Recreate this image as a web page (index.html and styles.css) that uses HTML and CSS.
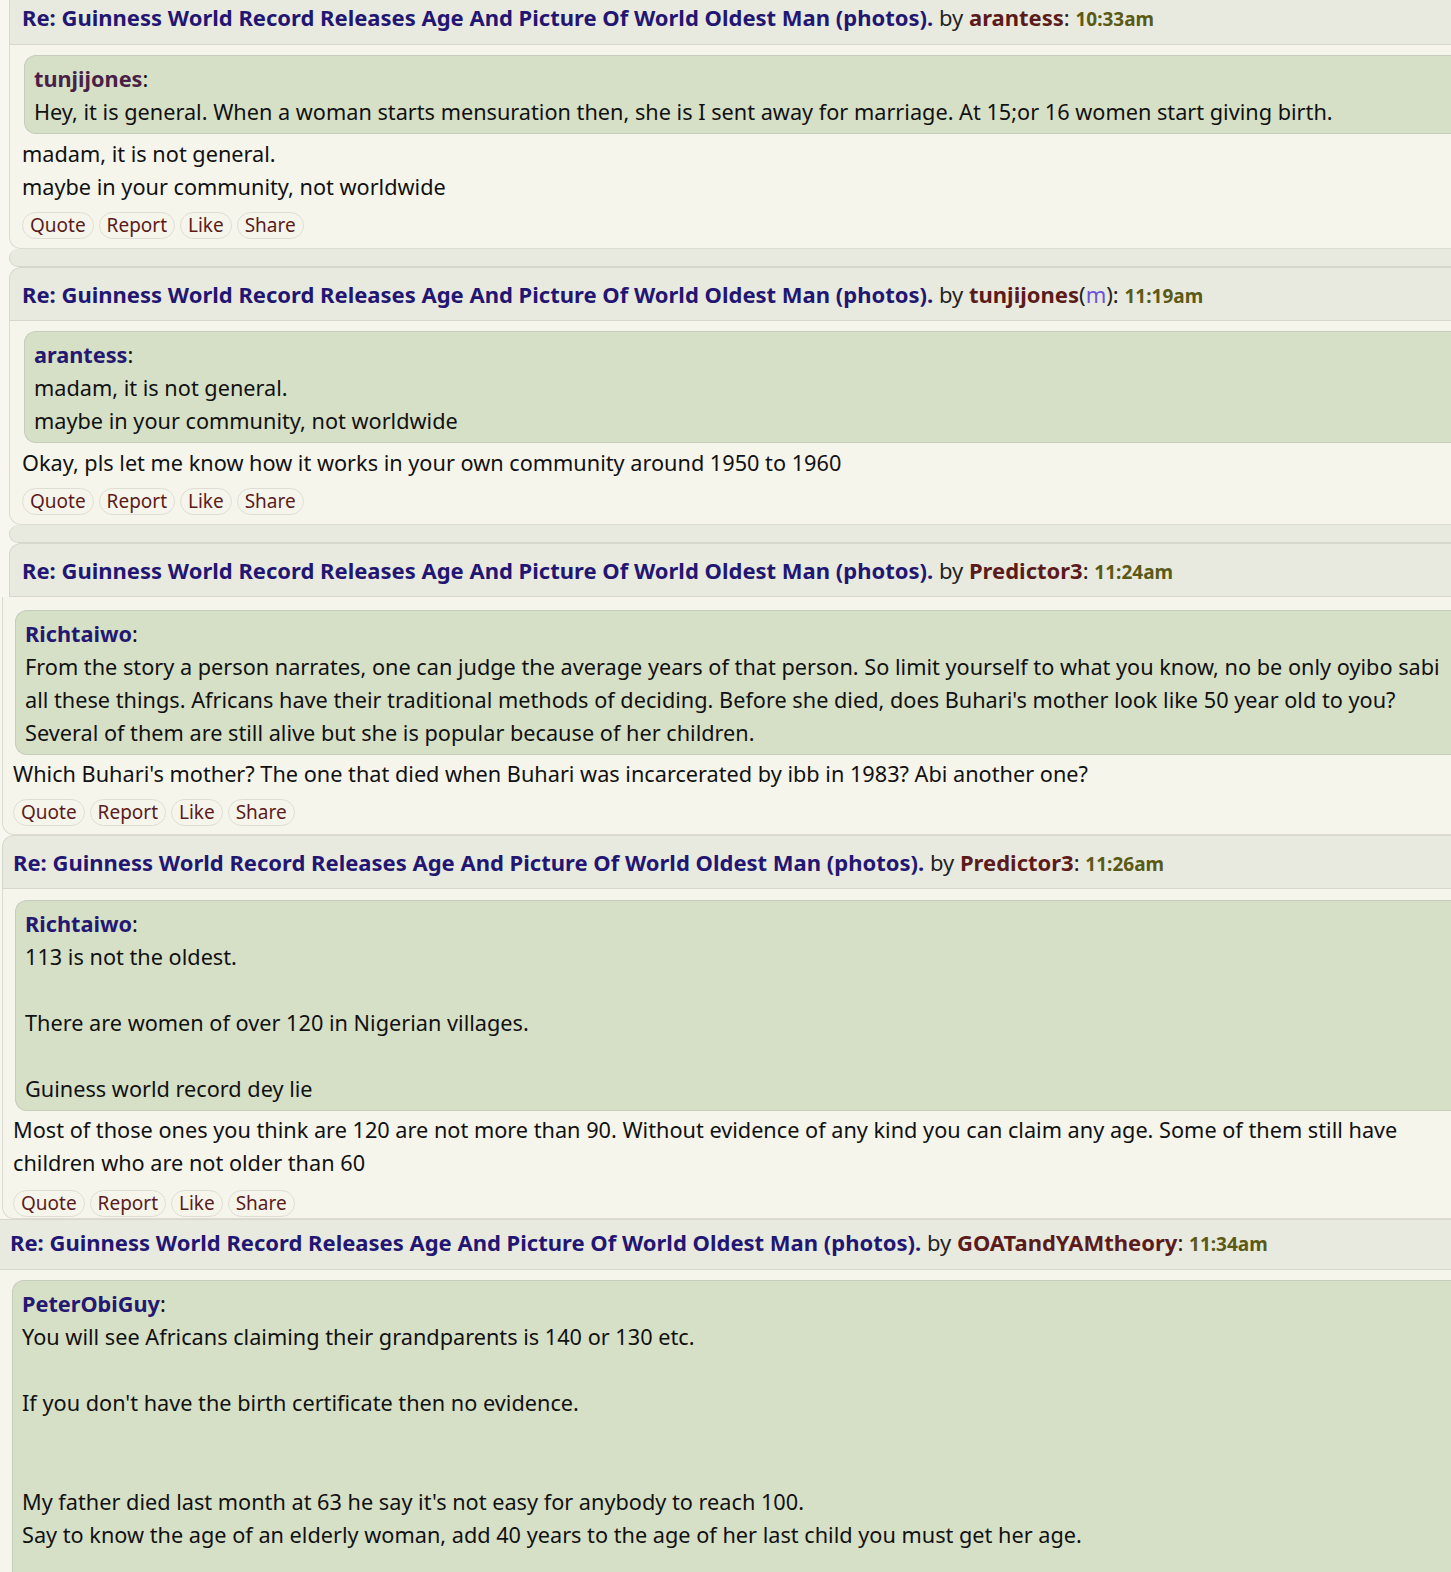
FILE: index.html
```html
<!DOCTYPE html>
<html lang="en">
<head>
  <meta charset="UTF-8" />
  <title>Re: Guinness World Record Releases Age And Picture Of World Oldest Man (photos)</title>
  <meta name="viewport" content="width=device-width, initial-scale=1.0" />
  <link rel="stylesheet" href="styles.css">
</head>
<body>

<div class="thread">

  <div class="post first">
    <div class="post-head">
      <a class="topic" href="#">Re: Guinness World Record Releases Age And Picture Of World Oldest Man (photos).</a>
      by <a class="user" href="#">arantess</a>: <span class="time">10:33am</span>
    </div>
    <div class="post-body">
      <blockquote>
        <b class="visited">tunjijones</b>:<br>
        Hey, it is general. When a woman starts mensuration then, she is I sent away for marriage. At 15;or 16 women start giving birth.
      </blockquote>
      <p>madam, it is not general.<br>maybe in your community, not worldwide</p>
      <div class="actions"><a href="#">Quote</a> <a href="#">Report</a> <a href="#">Like</a> <a href="#">Share</a></div>
    </div>
  </div>
  <div class="spacer"></div>

  <div class="post">
    <div class="post-head">
      <a class="topic" href="#">Re: Guinness World Record Releases Age And Picture Of World Oldest Man (photos).</a>
      by <a class="user" href="#">tunjijones</a>(<span class="gender">m</span>): <span class="time">11:19am</span>
    </div>
    <div class="post-body">
      <blockquote>
        <b>arantess</b>:<br>
        madam, it is not general.<br>
        maybe in your community, not worldwide
      </blockquote>
      <p>Okay, pls let me know how it works in your own community around 1950 to 1960</p>
      <div class="actions"><a href="#">Quote</a> <a href="#">Report</a> <a href="#">Like</a> <a href="#">Share</a></div>
    </div>
  </div>
  <div class="spacer"></div>

  <div class="post third">
    <div class="post-head">
      <a class="topic" href="#">Re: Guinness World Record Releases Age And Picture Of World Oldest Man (photos).</a>
      by <a class="user" href="#">Predictor3</a>: <span class="time">11:24am</span>
    </div>
    <div class="post-body wide">
      <blockquote>
        <b>Richtaiwo</b>:<br>
        From the story a person narrates, one can judge the average years of that person. So limit yourself to what you know, no be only oyibo sabi<br>
        all these things. Africans have their traditional methods of deciding. Before she died, does Buhari's mother look like 50 year old to you?<br>
        Several of them are still alive but she is popular because of her children.
      </blockquote>
      <p>Which Buhari's mother? The one that died when Buhari was incarcerated by ibb in 1983? Abi another one?</p>
      <div class="actions"><a href="#">Quote</a> <a href="#">Report</a> <a href="#">Like</a> <a href="#">Share</a></div>
    </div>
  </div>

  <div class="post shifted fourth">
    <div class="post-head">
      <a class="topic" href="#">Re: Guinness World Record Releases Age And Picture Of World Oldest Man (photos).</a>
      by <a class="user" href="#">Predictor3</a>: <span class="time">11:26am</span>
    </div>
    <div class="post-body">
      <blockquote>
        <b>Richtaiwo</b>:<br>
        113 is not the oldest.<br>
        <br>
        There are women of over 120 in Nigerian villages.<br>
        <br>
        Guiness world record dey lie
      </blockquote>
      <p>Most of those ones you think are 120 are not more than 90. Without evidence of any kind you can claim any age. Some of them still have<br>children who are not older than 60</p>
      <div class="actions"><a href="#">Quote</a> <a href="#">Report</a> <a href="#">Like</a> <a href="#">Share</a></div>
    </div>
  </div>

  <div class="post flush">
    <div class="post-head">
      <a class="topic" href="#">Re: Guinness World Record Releases Age And Picture Of World Oldest Man (photos).</a>
      by <a class="user" href="#">GOATandYAMtheory</a>: <span class="time">11:34am</span>
    </div>
    <div class="post-body">
      <blockquote>
        <b>PeterObiGuy</b>:<br>
        You will see Africans claiming their grandparents is 140 or 130 etc.<br>
        <br>
        If you don't have the birth certificate then no evidence.<br>
        <br>
        <br>
        My father died last month at 63 he say it's not easy for anybody to reach 100.<br>
        Say to know the age of an elderly woman, add 40 years to the age of her last child you must get her age.<br>
        <br>
        <br>
      </blockquote>
    </div>
  </div>

</div>

</body>
</html>
```

FILE: styles.css
```css
body {
  margin: 0;
  background: #f7f7f0;
  font-family: "Noto Sans", "Open Sans", sans-serif;
  font-size: 21.7px;
  color: #111;
  overflow: hidden;
}
a { text-decoration: none; }

.thread { margin-right: -60px; }

.post { margin-left: 9px; }
.post.first { margin-top: -9px; }
.post.shifted { margin-left: 2px; }
.post.flush { margin-left: -3px; }

.post-head {
  background: #e8eadf;
  border: 1px solid #d6d8cd;
  border-right: none;
  border-radius: 12px 0 0 0;
  padding: 11px 12px 9px;
  font-size: 22px;
  line-height: 30px;
  color: #222;
}
.post.first .post-head { padding-top: 10px; padding-bottom: 10px; }
.post-head .topic { color: #231672; font-weight: 700; }
.post-head .user { color: #5c1b1b; font-weight: 700; }
.post-head .gender { color: #6a55d8; }
.post-head .time { color: #5a5a16; font-weight: 700; font-size: 19px; }

.post-body {
  background: #f5f5ec;
  border: 1px solid #dcdcd2;
  border-top: none;
  border-right: none;
  border-radius: 0 0 0 12px;
  padding: 10px 12px 9px;
}

/* third post: body sticks out past its header */
.post-body.wide {
  margin-left: -7px;
  padding: 13px 12px 8px 10px;
}
.post-body.wide blockquote { margin-bottom: 2px; }

.post.shifted .post-head,
.post.shifted .post-body { padding-left: 10px; }
.post.fourth .post-body { padding-top: 11px; padding-bottom: 1px; }
.post.fourth blockquote { margin-bottom: 2px; }
.post.fourth .actions { margin-top: 11px; }

.post.flush .post-head { border-radius: 0; padding-top: 7px; padding-bottom: 10px; }
.post.flush .post-body { padding-top: 10px; }

blockquote {
  margin: 0 0 3px 2px;
  background: #d6e0c7;
  border: 1px solid #c6ccbb;
  border-right: none;
  border-radius: 12px 0 0 12px;
  padding: 6px 10px 5px 9px;
  line-height: 33px;
}
blockquote b { color: #241870; }
blockquote b.visited { color: #4a1f45; }

.post-body p {
  margin: 0;
  line-height: 33px;
}

.actions {
  margin-top: 9px;
  font-size: 19px;
  line-height: 25px;
}
.actions a {
  display: inline-block;
  color: #5c1b1b;
  border: 1px solid #deded4;
  border-radius: 14px;
  padding: 0 7px;
}

.spacer {
  margin-left: 9px;
  height: 17px;
  background: #e8eadf;
  border: 1px solid #d6d8cd;
  border-top: none;
  border-right: none;
  border-radius: 10px 0 0 10px;
}
```
